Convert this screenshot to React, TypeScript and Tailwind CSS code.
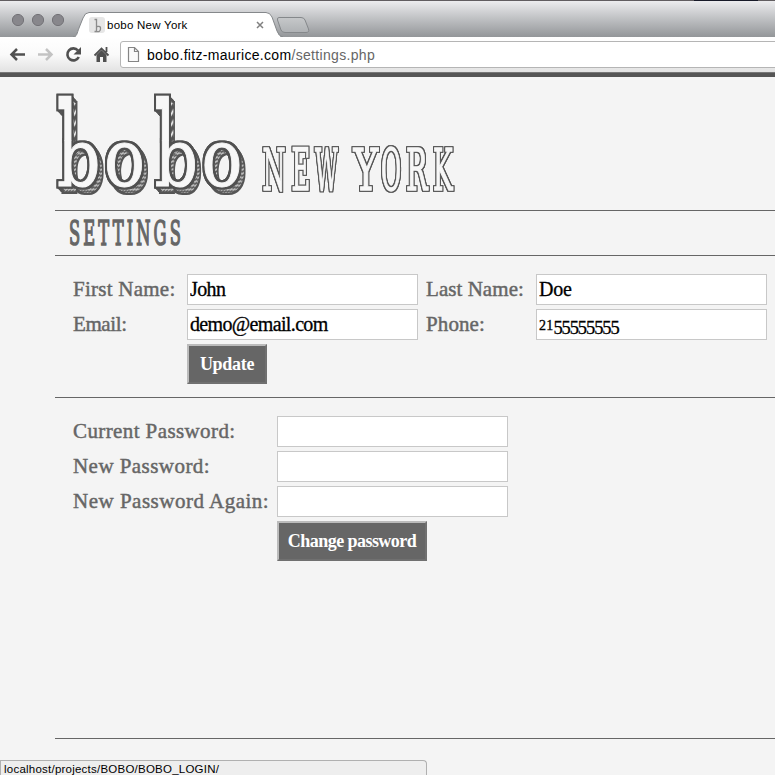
import React from "react";

const serif = "font-['Liberation_Serif',serif]";
const sans = "font-['Liberation_Sans',sans-serif]";

function Tabs() {
  return (
    <div className="relative h-[37px] shrink-0 border-t border-[#615d60] bg-linear-to-b from-[#ececee] to-[#939699]">
      <svg className="block" width="775" height="36" viewBox="0 1 775 36">
        <defs>
          <linearGradient id="stub" x1="0" y1="0" x2="0" y2="1">
            <stop offset="0" stopColor="#c6c8ca" />
            <stop offset="1" stopColor="#aeb1b4" />
          </linearGradient>
        </defs>
        {[18, 38, 58].map((x) => (
          <circle key={x} cx={x} cy="20" r="5.600" fill="#88878c" stroke="#737277" />
        ))}
        <path d="M73 37C77 37 77 33 79 28L83 18Q85 12.500 89 12.500H266Q270 12.500 272 17L277 31Q279 37 283 37Z" fill="#fff" stroke="#85888b" />
        <path d="M76 36.500H280" stroke="#fff" strokeWidth="1.500" />
        <path d="M279 17.500H301Q304 17.500 305 20L308.500 29Q309.500 32.500 306 32.500H285Q282 32.500 281 30L277.500 20Q277 17.500 279 17.500Z" fill="url(#stub)" stroke="#85888b" />
        <rect x="89" y="17" width="16" height="16" rx="3" fill="#e6e6e6" />
        <path d="M94.500 19.500h2v12h-2M97 26.500q4-1 3.500 2.500t-4 2.500" fill="none" stroke="#8c8c8c" strokeWidth="1.300" />
        <path d="M257 22l6 6M263 22l-6 6" stroke="#808080" strokeWidth="1.500" />
      </svg>
      <span className={`${sans} absolute left-[107px] top-[17px] text-[11.500px] leading-[14px] tracking-[0.250px] text-black`}>bobo New York</span>
      <div className="absolute -top-px left-[694px] h-px w-[64px] bg-[#181a28]" />
    </div>
  );
}

function Toolbar() {
  return (
    <div className="flex h-[35px] shrink-0 items-start bg-linear-to-b from-white via-[#fafafa] to-[#e2e2e2]">
      <svg className="shrink-0" width="120" height="35" viewBox="0 37 120 35" fill="none">
        <path d="M25 54.500H12M17 49l-5.500 5.500L17 60" stroke="#505050" strokeWidth="2.500" />
        <path d="M38 54.500H51M46 49l5.500 5.500L46 60" stroke="#c3c3c3" strokeWidth="2.500" />
        <path d="M78 50.500A6 6 0 1 0 78.800 57" stroke="#505050" strokeWidth="2.600" />
        <path d="M81 47v7.500h-7.500z" fill="#505050" />
        <path d="M94.500 55.500L101.500 48.500l7 7M106.500 47v5" stroke="#505050" strokeWidth="1.800" />
        <path d="M96.500 55L101.500 50l5 5v7h-3.500v-5h-3v5h-3.500z" fill="#505050" />
      </svg>
      <div className="mt-[4px] flex h-[27px] w-[680px] shrink-0 items-center rounded-l-[3px] border border-[#b5b5b5] bg-white pl-[6px]">
        <svg width="13" height="17" viewBox="0 0 13 17" className="shrink-0">
          <path d="M1.500 1.500h6l4 4v10h-10zM7.500 1.500v4h4" fill="#fafafa" stroke="#858585" strokeWidth="1.200" />
        </svg>
        <span className={`${sans} relative top-px ml-[7px] whitespace-nowrap text-[14px] tracking-[0.320px] text-black`}>
          bobo.fitz-maurice.com<span className="text-[#666]">/settings.php</span>
        </span>
      </div>
    </div>
  );
}

// Tall, narrow outlined capitals: [letter, left edge, horizontal scale]
const capitals: [string, number, number][] = [
  ["N", 262.5, 0.45], ["E", 291.5, 0.44], ["W", 315, 0.38],
  ["Y", 353.5, 0.64], ["O", 381, 0.42], ["R", 406, 0.49], ["K", 433, 0.45],
];

function Logo() {
  return (
    <svg className="block shrink-0" width="720" height="133" viewBox="55 77 720 133">
      <defs>
        <pattern id="hatch" width="3.500" height="4" patternUnits="userSpaceOnUse">
          <rect width="3.500" height="4" fill="#555" />
          <path d="M0 3L3.500 1" stroke="#f4f4f4" strokeWidth="1.300" />
        </pattern>
        <filter id="outline" x="-5%" y="-5%" width="110%" height="110%" colorInterpolationFilters="sRGB">
          <feMorphology in="SourceAlpha" operator="dilate" radius="2" result="fat" />
          <feFlood floodColor="#505050" />
          <feComposite in2="fat" operator="in" result="edge" />
          <feMerge><feMergeNode in="edge" /><feMergeNode in="edge" /><feMergeNode in="SourceGraphic" /></feMerge>
        </filter>
        <filter id="fine" x="-5%" y="-5%" width="110%" height="110%" colorInterpolationFilters="sRGB">
          <feMorphology in="SourceAlpha" operator="dilate" radius="1" result="fat" />
          <feFlood floodColor="#555" />
          <feComposite in2="fat" operator="in" result="edge" />
          <feMerge><feMergeNode in="edge" /><feMergeNode in="edge" /><feMergeNode in="SourceGraphic" /></feMerge>
        </filter>
        <filter id="solid" x="-5%" y="-5%" width="110%" height="110%" colorInterpolationFilters="sRGB">
          <feMorphology in="SourceGraphic" operator="dilate" radius="2" />
        </filter>
        <clipPath id="upper"><rect x="-2" y="-80" width="232" height="35" /></clipPath>
        <clipPath id="lower"><rect x="-2" y="-45.500" width="232" height="60" /></clipPath>
        <text id="word" fontFamily="DejaVu Serif" fontSize="81" x="0 56 116 172" y="0">bobo</text>
        <g id="face" transform="translate(57 185.500) scale(.84 1)">
          <g transform="translate(0 -45) scale(1 2.620) translate(0 45)"><g clipPath="url(#upper)"><use href="#word" /></g></g>
          <g clipPath="url(#lower)"><use href="#word" /></g>
        </g>
      </defs>
      <g fill="#555" filter="url(#solid)">
        {[1, 2, 3, 4, 5].map((d) => <use key={d} href="#face" x={d * 0.9} y={d * 1.2} />)}
      </g>
      {[3, 4, 5].map((d) => <use key={d} href="#face" x={d} y={d * 1.2} fill="url(#hatch)" />)}
      <g fill="#f7f7f7" stroke="#f7f7f7" strokeWidth="1" filter="url(#outline)"><use href="#face" /></g>
      <g fill="#f7f7f7" stroke="#f7f7f7" strokeWidth="1.400" filter="url(#fine)" fontFamily="DejaVu Serif" fontSize="58.500">
        {capitals.map(([c, x, s]) => <text key={c} transform={`translate(${x} 189.500) scale(${s} 1)`}>{c}</text>)}
      </g>
    </svg>
  );
}

const label = `${serif} text-[21px] leading-[31px] text-[#666] [-webkit-text-stroke:0.450px_#666] whitespace-nowrap`;
const field = `${serif} block h-[31px] w-[231px] border border-[#c8c8c8] bg-white px-[2px] text-[20px] leading-[29px] text-black outline-none [-webkit-text-stroke:0.300px_black]`;
const button = `${serif} h-[40px] border-2 border-t-[#bbb] border-l-[#bbb] border-r-[#707070] border-b-[#707070] bg-[#666] p-0 text-[18px] font-bold text-white whitespace-nowrap`;

export default function App() {
  return (
    <div className="relative flex h-[775px] w-[775px] flex-col overflow-hidden bg-[#f4f4f4]">
      <Tabs />
      <Toolbar />
      <div className="h-[5px] shrink-0 border-t border-[#777] bg-[#555]" />
      <main className="ml-[55px] flex w-[720px] shrink-0 flex-col">
        <Logo />
        <div className="h-[46px] border-y border-[#666]">
          <svg className="block" width="200" height="44" viewBox="55 211 200 44">
            <text transform="translate(69 244.500) scale(.48 1)" fontFamily="DejaVu Serif" fontSize="34" letterSpacing="6.500" fill="#666" stroke="#666" strokeWidth="1.700">SETTINGS</text>
          </svg>
        </div>
        <section className="h-[142px] border-b border-[#666] pl-[18px] pt-[18px]">
          <div className="grid grid-cols-[114px_239px_110px_231px] gap-y-1">
            <label className={`${label} tracking-[0.250px]`}>First Name:</label>
            <input className={`${field} tracking-[-0.600px]`} defaultValue="John" />
            <label className={`${label} tracking-[0.050px]`}>Last Name:</label>
            <input className={`${field} tracking-[-0.200px]`} defaultValue="Doe" />
            <label className={`${label} tracking-[-0.400px]`}>Email:</label>
            <input className={`${field} tracking-[-0.650px]`} defaultValue="demo@email.com" />
            <label className={`${label} tracking-[0.100px]`}>Phone:</label>
            <div className={`${field} flex`}>
              <span className="relative top-px text-[14px] tracking-[0.200px]">21</span>
              <span className="relative top-[4px] text-[18.500px] tracking-[-1.100px]">55555555</span>
            </div>
          </div>
          <button className={`${button} ml-[114px] mt-1 w-[80px] tracking-[-0.300px]`}>Update</button>
        </section>
        <section className="h-[341px] border-b border-[#666] pl-[18px] pt-[18px]">
          <div className="grid grid-cols-[204px_231px] gap-y-1">
            <label className={`${label} tracking-[0.400px]`}>Current Password:</label>
            <input className={field} type="password" />
            <label className={`${label} tracking-[0.450px]`}>New Password:</label>
            <input className={field} type="password" />
            <label className={`${label} tracking-[0.500px]`}>New Password Again:</label>
            <input className={field} type="password" />
          </div>
          <button className={`${button} ml-[204px] mt-1 w-[150px] tracking-[-0.550px] text-[17.500px]`}>Change password</button>
        </section>
      </main>
      <div className={`${sans} absolute bottom-0 left-0 h-[15px] w-[427px] rounded-tr-[4px] border border-b-0 border-[#b0b0b0] bg-[#eee] pl-[3px] text-[11.500px] leading-[16px] tracking-[0.230px] text-black`}>
        localhost/projects/BOBO/BOBO_LOGIN/
      </div>
    </div>
  );
}
